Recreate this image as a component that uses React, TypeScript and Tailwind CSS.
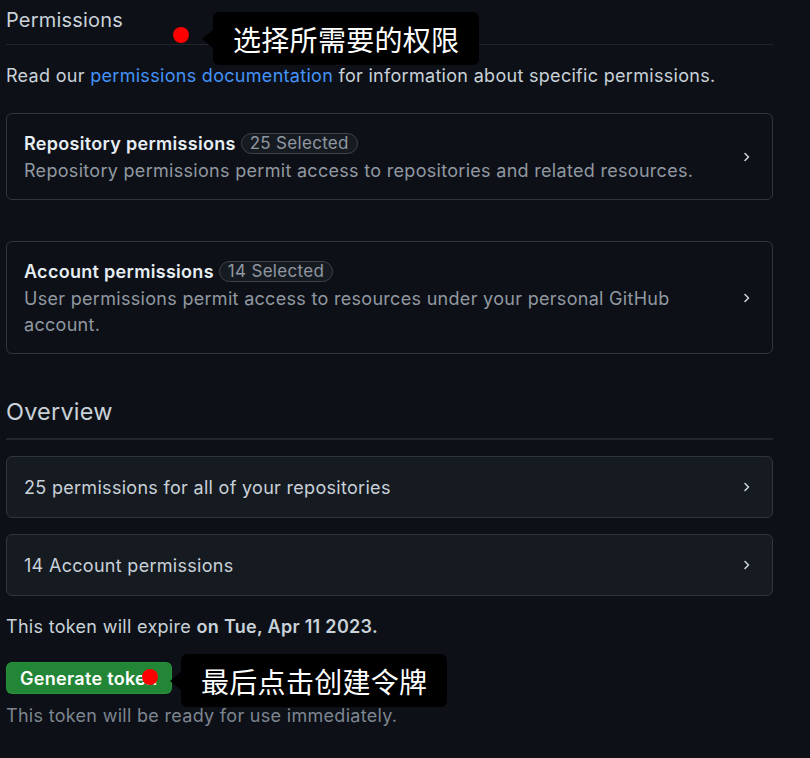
import React from "react";

const Chevron = () => (
  <svg width="10" height="14" viewBox="0 0 10 14" className="shrink-0">
    <path d="M3 3.5 L6.5 7 L3 10.5" fill="none" stroke="#c9d1d9" strokeWidth="1.6" strokeLinecap="round" strokeLinejoin="round" />
  </svg>
);

const Tip = ({ text }: { text: string }) => (
  <div className="relative flex items-center">
    <div className="w-0 h-0 border-y-[9px] border-y-transparent border-r-[11px] border-r-black" />
    <div className="bg-black rounded-md px-[20px] h-[53px] flex items-center text-white text-[28px] leading-none" style={{ fontFamily: '"Noto Sans CJK SC", sans-serif' }}>
      {text}
    </div>
  </div>
);

export default function App() {
  return (
    <div className="min-h-[758px] w-[810px] bg-[#0d1117] text-[#c9d1d9] overflow-hidden tracking-[0.3px]" style={{ fontFamily: 'Inter, "Liberation Sans", sans-serif' }}>
      <div className="pl-[6px] w-[773px]">
        {/* Permissions heading */}
        <div className="relative border-b border-[#21262d] h-[45px]">
          <div className="pt-[8px] text-[20px] leading-[24px] tracking-[0.2px] text-[#c9d1d9]">Permissions</div>
          <div className="absolute left-[167px] top-[12px] flex items-center">
            <div className="w-[16px] h-[16px] rounded-full bg-[#ff0000] mb-[8px] mr-[13px]" />
            <Tip text="选择所需要的权限" />
          </div>
        </div>
        <p className="mt-[19px] text-[18px] leading-[24px]">
          Read our <span className="text-[#4493f8]">permissions documentation</span> for information about specific permissions.
        </p>

        {/* Repository permissions card */}
        <div className="mt-[25px] border border-[#30363d] rounded-md h-[87px] pl-[17px] pr-[20px] flex items-center justify-between">
          <div>
            <div className="flex items-center gap-[5px]">
              <span className="font-semibold text-[18px] text-[#e6edf3]">Repository permissions</span>
              <span className="border border-[#3d444d] bg-[#161b22] rounded-full px-[8px] h-[21px] flex items-center pt-[1px] text-[17px] text-[#9198a1]">25 Selected</span>
            </div>
            <div className="mt-[1px] text-[18px] leading-[26px] text-[#9198a1]">
              Repository permissions permit access to repositories and related resources.
            </div>
          </div>
          <Chevron />
        </div>

        {/* Account permissions card */}
        <div className="mt-[41px] border border-[#30363d] rounded-md h-[113px] pl-[17px] pr-[20px] flex items-center justify-between">
          <div className="w-[680px]">
            <div className="flex items-center gap-[5px]">
              <span className="font-semibold text-[18px] text-[#e6edf3]">Account permissions</span>
              <span className="border border-[#3d444d] bg-[#161b22] rounded-full px-[8px] h-[21px] flex items-center pt-[1px] text-[17px] text-[#9198a1]">14 Selected</span>
            </div>
            <div className="mt-[1px] text-[18px] leading-[26px] text-[#9198a1]">
              User permissions permit access to resources under your personal GitHub account.
            </div>
          </div>
          <Chevron />
        </div>

        {/* Overview */}
        <div className="mt-[44px] border-b-2 border-[#21262d] pb-[12px] text-[23.5px] leading-[28px] tracking-[0.2px]">Overview</div>

        <div className="mt-[16px] border border-[#30363d] bg-[#161b22] rounded-md h-[62px] pl-[17px] pr-[20px] flex items-center justify-between">
          <span className="text-[18px]">25 permissions for all of your repositories</span>
          <Chevron />
        </div>
        <div className="mt-[16px] border border-[#30363d] bg-[#161b22] rounded-md h-[62px] pl-[17px] pr-[20px] flex items-center justify-between">
          <span className="text-[18px]">14 Account permissions</span>
          <Chevron />
        </div>

        <p className="mt-[19px] text-[18px] leading-[24px]">
          This token will expire <span className="font-semibold">on Tue, Apr 11 2023.</span>
        </p>

        <div className="relative mt-[23px] flex items-center gap-[15px] h-[32px]">
          <button className="bg-[#238636] border border-[#2ea043]/40 rounded-md h-[32px] w-[166px] text-white font-semibold text-[18px] flex items-center pl-[13px]">
            Generate token
          </button>
          <span className="text-[#4493f8] text-[18px]">Cancel</span>
          <div className="absolute left-[136px] top-[-8px] flex items-center">
            <div className="w-[16px] h-[16px] rounded-full bg-[#ff0000] mr-[12px] mb-[8px]" />
            <Tip text="最后点击创建令牌" />
          </div>
        </div>
        <p className="mt-[10px] text-[18px] leading-[24px] text-[#7d8590]">This token will be ready for use immediately.</p>
      </div>
    </div>
  );
}
